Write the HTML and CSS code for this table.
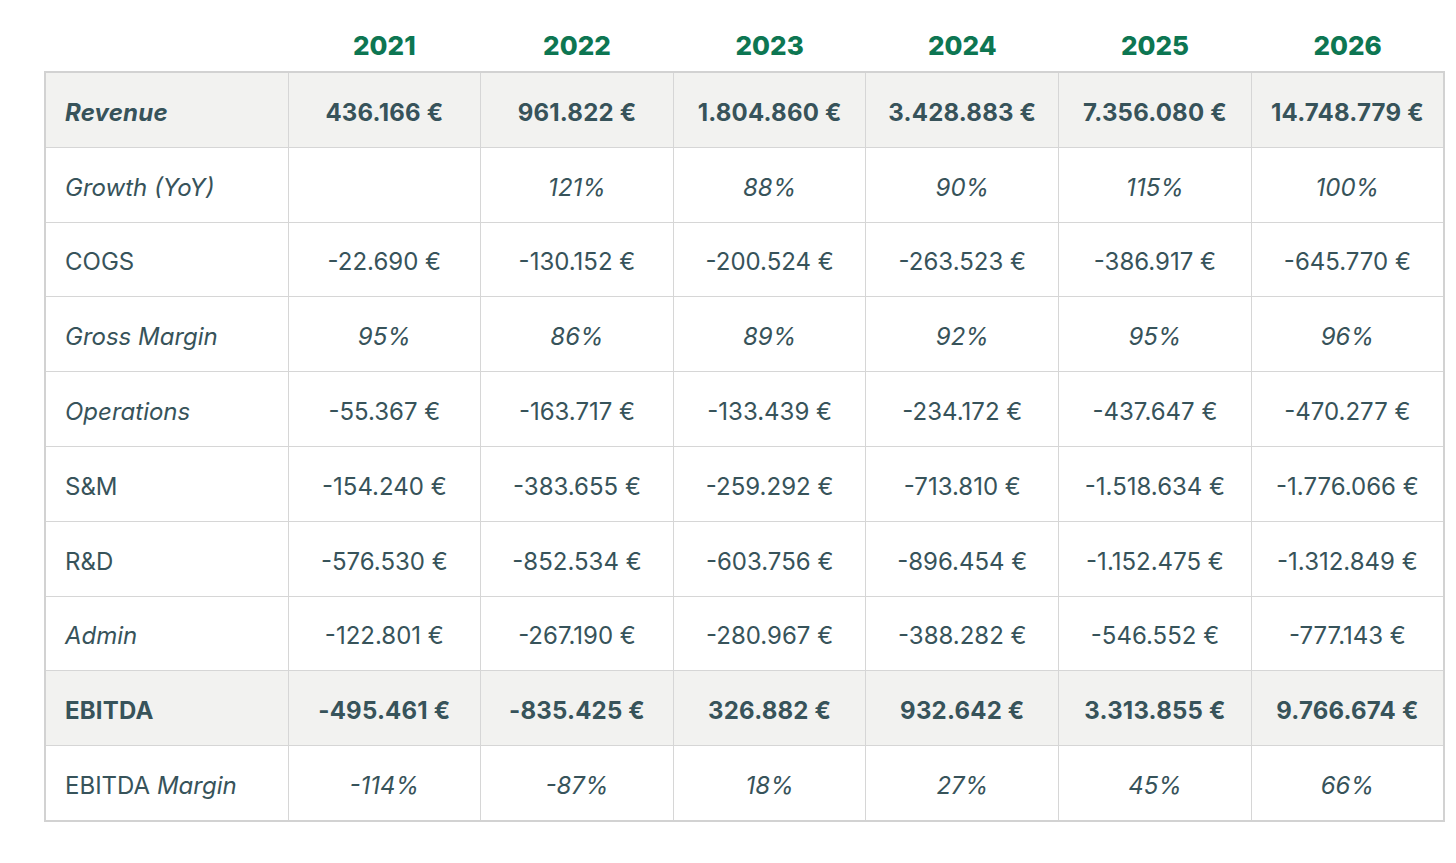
FILE: index.html
```html
<!DOCTYPE html>
<html>
<head>
<meta charset="utf-8">
<link rel="stylesheet" href="styles.css">
</head>
<body>
<div class="wrap">
<table class="fin">
  <colgroup><col class="c-label"><col><col><col><col><col><col></colgroup>
  <thead>
    <tr><th></th><th>2021</th><th>2022</th><th>2023</th><th>2024</th><th>2025</th><th>2026</th></tr>
  </thead>
  <tbody>
    <tr class="shade bold"><td class="label"><em>Revenue</em></td><td>436.166 €</td><td>961.822 €</td><td>1.804.860 €</td><td>3.428.883 €</td><td>7.356.080 €</td><td>14.748.779 €</td></tr>
    <tr class="ital"><td class="label">Growth (YoY)</td><td></td><td>121%</td><td>88%</td><td>90%</td><td>115%</td><td>100%</td></tr>
    <tr><td class="label">COGS</td><td>-22.690 €</td><td>-130.152 €</td><td>-200.524 €</td><td>-263.523 €</td><td>-386.917 €</td><td>-645.770 €</td></tr>
    <tr class="ital"><td class="label">Gross Margin</td><td>95%</td><td>86%</td><td>89%</td><td>92%</td><td>95%</td><td>96%</td></tr>
    <tr><td class="label"><em>Operations</em></td><td>-55.367 €</td><td>-163.717 €</td><td>-133.439 €</td><td>-234.172 €</td><td>-437.647 €</td><td>-470.277 €</td></tr>
    <tr><td class="label">S&amp;M</td><td>-154.240 €</td><td>-383.655 €</td><td>-259.292 €</td><td>-713.810 €</td><td>-1.518.634 €</td><td>-1.776.066 €</td></tr>
    <tr><td class="label">R&amp;D</td><td>-576.530 €</td><td>-852.534 €</td><td>-603.756 €</td><td>-896.454 €</td><td>-1.152.475 €</td><td>-1.312.849 €</td></tr>
    <tr><td class="label"><em>Admin</em></td><td>-122.801 €</td><td>-267.190 €</td><td>-280.967 €</td><td>-388.282 €</td><td>-546.552 €</td><td>-777.143 €</td></tr>
    <tr class="shade bold"><td class="label">EBITDA</td><td>-495.461 €</td><td>-835.425 €</td><td>326.882 €</td><td>932.642 €</td><td>3.313.855 €</td><td>9.766.674 €</td></tr>
    <tr class="ital-vals"><td class="label">EBITDA <em>Margin</em></td><td>-114%</td><td>-87%</td><td>18%</td><td>27%</td><td>45%</td><td>66%</td></tr>
  </tbody>
</table>
</div>
</body>
</html>
```

FILE: styles.css
```css
html, body {
  margin: 0;
  padding: 0;
  background: #ffffff;
}
body {
  font-family: Inter, "Noto Sans", sans-serif;
  color: #37535a;
}
.wrap {
  padding: 0 0 0 44px;
}
.fin {
  width: 1401px;
  table-layout: fixed;
  border-collapse: collapse;
}
.fin .c-label {
  width: 243px;
}
.fin thead th {
  height: 61px;
  padding: 0 0 10px 0;
  vertical-align: bottom;
  text-align: center;
  font-size: 26px;
  font-weight: 800;
  color: #0d7652;
  border: none;
  line-height: 30px;
}
.fin tbody {
  border: 2px solid #d2d2d2;
}
.fin td {
  height: 67.8px;
  padding: 6px 0 0 0;
  border: 1px solid #d6d6d6;
  text-align: center;
  vertical-align: middle;
  font-size: 24px;
  line-height: 28px;
}
.fin td.label {
  text-align: left;
  padding-left: 19px;
}
.fin em {
  font-style: italic;
}
.shade td {
  background: #f2f2f0;
}
.bold td {
  font-weight: 700;
  letter-spacing: 0.2px;
}
.ital td {
  font-style: italic;
}
.ital-vals td:not(.label) {
  font-style: italic;
}
```
